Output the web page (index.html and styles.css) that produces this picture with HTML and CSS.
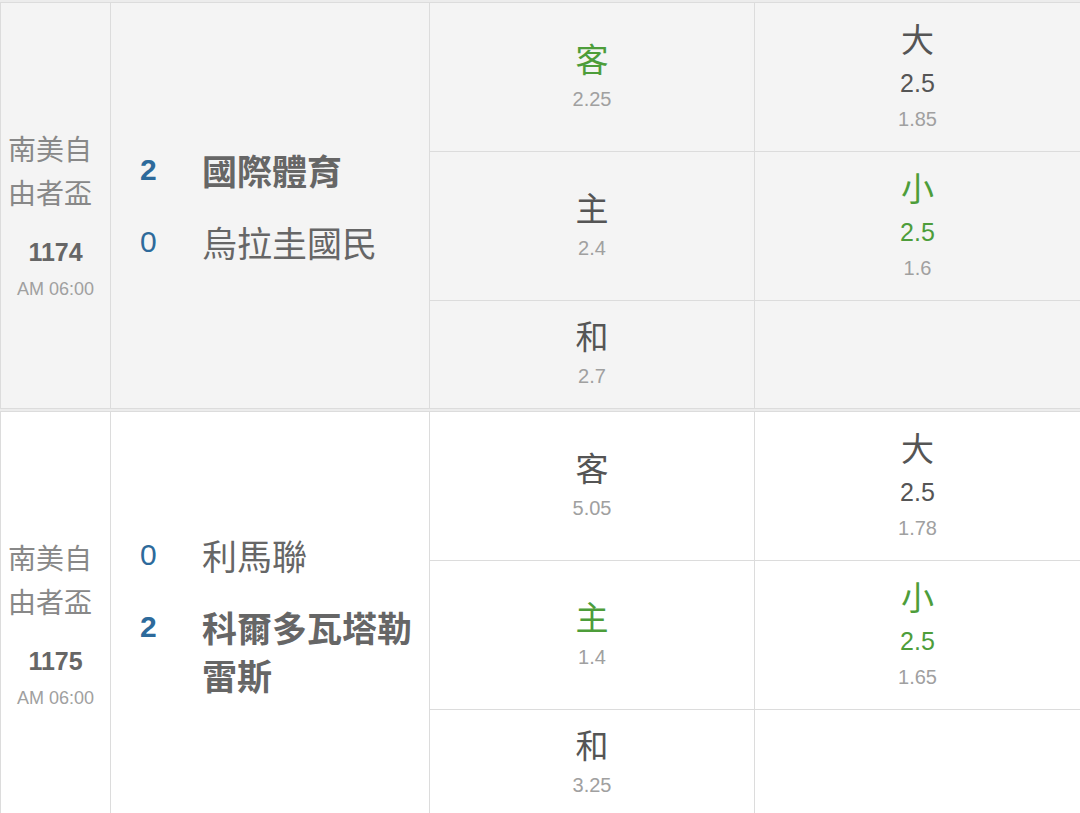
FILE: index.html
```html
<!DOCTYPE html>
<html lang="zh-Hant">
<head>
<meta charset="utf-8">
<title>賽事</title>
<link rel="stylesheet" href="styles.css">
</head>
<body>
<div class="list">
  <div class="match shaded">
    <div class="league-cell">
      <div class="league-name">南美自由者盃</div>
      <div class="match-no">1174</div>
      <div class="match-time">AM 06:00</div>
    </div>
    <div class="teams-cell">
      <div class="team win"><span class="score">2</span><span class="name">國際體育</span></div>
      <div class="team"><span class="score">0</span><span class="name">烏拉圭國民</span></div>
    </div>
    <div class="odd-cell"><span class="label hit">客</span><span class="price">2.25</span></div>
    <div class="odd-cell"><span class="label">大</span><span class="line">2.5</span><span class="price">1.85</span></div>
    <div class="odd-cell"><span class="label">主</span><span class="price">2.4</span></div>
    <div class="odd-cell"><span class="label hit">小</span><span class="line hit">2.5</span><span class="price">1.6</span></div>
    <div class="odd-cell"><span class="label">和</span><span class="price">2.7</span></div>
    <div class="odd-cell"></div>
  </div>
  <div class="match">
    <div class="league-cell">
      <div class="league-name">南美自由者盃</div>
      <div class="match-no">1175</div>
      <div class="match-time">AM 06:00</div>
    </div>
    <div class="teams-cell">
      <div class="team"><span class="score">0</span><span class="name">利馬聯</span></div>
      <div class="team win"><span class="score">2</span><span class="name">科爾多瓦塔勒雷斯</span></div>
    </div>
    <div class="odd-cell"><span class="label">客</span><span class="price">5.05</span></div>
    <div class="odd-cell"><span class="label">大</span><span class="line">2.5</span><span class="price">1.78</span></div>
    <div class="odd-cell"><span class="label hit">主</span><span class="price">1.4</span></div>
    <div class="odd-cell"><span class="label hit">小</span><span class="line hit">2.5</span><span class="price">1.65</span></div>
    <div class="odd-cell"><span class="label">和</span><span class="price">3.25</span></div>
    <div class="odd-cell"></div>
  </div>
</div>
</body>
</html>
```

FILE: styles.css
```css
* { box-sizing: border-box; }

html, body {
  margin: 0;
  padding: 0;
}

body {
  background: #f4f4f4;
  font-family: "Liberation Sans", "Noto Sans CJK TC", sans-serif;
  color: #555;
}

.list {
  padding-top: 2px;
  background: #ececec;
  display: flex;
  flex-direction: column;
  gap: 2px;
}

.match {
  display: grid;
  grid-template-columns: 109px 318px 324px 1fr;
  grid-template-rows: 148px 148px 107px;
  gap: 1px;
  background: #dcdcdc;
  border-top: 1px solid #dcdcdc;
  border-bottom: 1px solid #dcdcdc;
  border-left: 1px solid #dcdcdc;
}

.match > div {
  background: #fff;
}

.match.shaded > div {
  background: #f4f4f4;
}

.league-cell {
  grid-row: 1 / 4;
  grid-column: 1;
  display: flex;
  flex-direction: column;
  justify-content: center;
  padding: 17px 7px 0 7px;
}

.league-name {
  font-family: "Noto Sans CJK TC", sans-serif;
  font-size: 28px;
  line-height: 44px;
  color: #888;
  text-align: left;
}

.match-no {
  margin-top: 22px;
  font-size: 25px;
  line-height: 32px;
  font-weight: bold;
  color: #666;
  text-align: center;
}

.match-time {
  margin-top: 8px;
  font-size: 18px;
  line-height: 26px;
  color: #a0a0a0;
  text-align: center;
}

.teams-cell {
  grid-row: 1 / 4;
  grid-column: 2;
  display: flex;
  flex-direction: column;
  justify-content: center;
  gap: 24px;
  padding: 1px 10px 0 29px;
}

.team {
  display: flex;
  align-items: flex-start;
}

.score {
  flex: 0 0 62px;
  font-size: 30px;
  line-height: 48px;
  color: #2d6a9b;
}

.name {
  flex: 1;
  font-family: "Noto Sans CJK TC", sans-serif;
  font-size: 35px;
  line-height: 48px;
  color: #666;
}

.team.win .score,
.team.win .name {
  font-weight: bold;
}

.odd-cell {
  display: flex;
  flex-direction: column;
  align-items: center;
  justify-content: center;
}

.label {
  font-family: "Noto Sans CJK TC", sans-serif;
  font-size: 33px;
  line-height: 44px;
  margin-top: -4px;
  margin-bottom: 3px;
  color: #555;
}

.line {
  font-size: 25px;
  line-height: 40px;
  color: #555;
}

.price {
  font-size: 20px;
  line-height: 32px;
  color: #a0a0a0;
}

.hit {
  color: #4d9d3a;
}
```
